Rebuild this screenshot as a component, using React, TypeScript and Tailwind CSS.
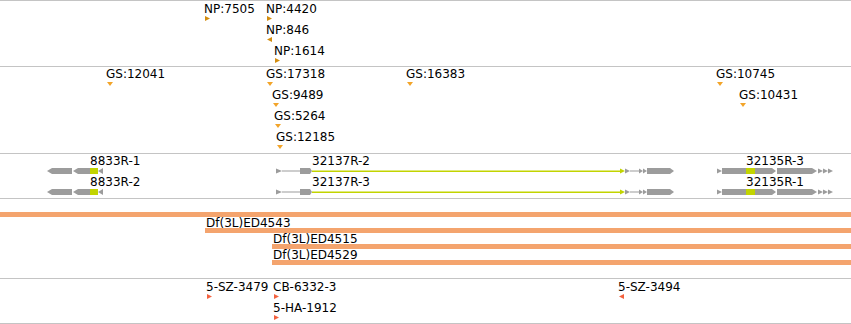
import React from "react";

type Dir = "r" | "l" | "d";
type Feat = { x: number; text: string; dir?: Dir };

const GRAY = "#9c9c9c";
const GREEN = "#c2d400";

function Tri({ dir, color }: { dir: Dir; color: string }) {
  const pts = dir === "r" ? "0,0 5,2.5 0,5" : dir === "l" ? "5,0 0,2.5 5,5" : "0,0 6,0 3,4";
  return (
    <svg width={6} height={5} className={dir === "d" ? "mt-px" : ""}>
      <polygon points={pts} fill={color} />
    </svg>
  );
}

// one stacked row of point features; x is the genomic position on the canvas
function FeatRow({ feats, color }: { feats: Feat[]; color: string }) {
  return (
    <div className="relative h-[21px]">
      {feats.map((f) => (
        <div key={f.text} className="absolute top-0 flex flex-col items-start" style={{ left: f.x }}>
          <span className="-ml-px whitespace-nowrap leading-[13px]">{f.text}</span>
          <Tri dir={f.dir ?? "d"} color={color} />
        </div>
      ))}
    </div>
  );
}

function GeneGlyphs() {
  return (
    <svg width={851} height={6} className="block">
      {/* 8833R */}
      <polygon points="47,3 52,0 72,0 72,6 52,6" fill={GRAY} />
      <polygon points="73,3 78,0 90,0 90,6 78,6" fill={GRAY} />
      <rect x={90} y={0} width={8} height={6} fill={GREEN} />
      <polygon points="98,3 103,0 103,6" fill={GRAY} />
      {/* 32137R */}
      <polygon points="276,0.5 282,3 276,5.5" fill={GRAY} />
      <rect x={282} y={2.5} width={18} height={1} fill={GRAY} />
      <polygon points="300,0 310,0 312,3 310,6 300,6" fill={GRAY} />
      <rect x={312} y={2.5} width={309} height={1.5} fill={GREEN} />
      <polygon points="620,0.5 625,3 620,5.5" fill={GREEN} />
      <polygon points="625,0.5 630,3 625,5.5" fill={GRAY} />
      <rect x={630} y={2.5} width={9} height={1} fill={GRAY} />
      <polygon points="639,0.5 643,3 639,5.5" fill={GRAY} />
      <polygon points="643,0.5 647,3 643,5.5" fill={GRAY} />
      <polygon points="647,0 670,0 674,3 670,6 647,6" fill={GRAY} />
      {/* 32135R */}
      <polygon points="717,0.5 722,3 717,5.5" fill={GRAY} />
      <rect x={722} y={0} width={24} height={6} fill={GRAY} />
      <rect x={746} y={0} width={9} height={6} fill={GREEN} />
      <polygon points="755,0 772,0 776,3 772,6 755,6" fill={GRAY} />
      <polygon points="777,0 812,0 817,3 812,6 777,6" fill={GRAY} />
      <polygon points="818,0.5 823,3 818,5.5" fill={GRAY} />
      <polygon points="823,0.5 828,3 823,5.5" fill={GRAY} />
      <polygon points="828,0.5 833,3 828,5.5" fill={GRAY} />
    </svg>
  );
}

function GeneRow({ labels }: { labels: Feat[] }) {
  return (
    <div className="flex flex-col">
      <div className="relative h-[13px]">
        {labels.map((l) => (
          <span key={l.text} className="absolute top-0 whitespace-nowrap leading-[13px]" style={{ left: l.x }}>
            {l.text}
          </span>
        ))}
      </div>
      <GeneGlyphs />
    </div>
  );
}

const npRows: Feat[][] = [
  [
    { x: 205, text: "NP:7505", dir: "r" },
    { x: 267, text: "NP:4420", dir: "r" },
  ],
  [{ x: 267, text: "NP:846", dir: "l" }],
  [{ x: 275, text: "NP:1614", dir: "r" }],
];

const gsRows: Feat[][] = [
  [
    { x: 107, text: "GS:12041" },
    { x: 267, text: "GS:17318" },
    { x: 407, text: "GS:16383" },
    { x: 717, text: "GS:10745" },
  ],
  [
    { x: 273, text: "GS:9489" },
    { x: 740, text: "GS:10431" },
  ],
  [{ x: 275, text: "GS:5264" }],
  [{ x: 277, text: "GS:12185" }],
];

const dfs = [
  { x: 0, text: "" },
  { x: 205, text: "Df(3L)ED4543" },
  { x: 272, text: "Df(3L)ED4515" },
  { x: 272, text: "Df(3L)ED4529" },
];

const insRows: Feat[][] = [
  [
    { x: 207, text: "5-SZ-3479", dir: "r" },
    { x: 274, text: "CB-6332-3", dir: "r" },
    { x: 619, text: "5-SZ-3494", dir: "l" },
  ],
  [{ x: 274, text: "5-HA-1912", dir: "r" }],
];

export default function App() {
  return (
    <div className="flex w-[851px] h-[324px] flex-col overflow-hidden bg-white text-black text-[12px] font-['DejaVu_Sans',sans-serif]">
      {/* NP track */}
      <div className="flex h-[66px] flex-col border-t border-[#c4c4c4] pt-[2px]">
        {npRows.map((r, i) => (
          <FeatRow key={i} feats={r} color="#d38d0f" />
        ))}
      </div>

      {/* GS track */}
      <div className="flex h-[87px] flex-col border-t border-[#c4c4c4] pt-px">
        {gsRows.map((r, i) => (
          <FeatRow key={i} feats={r} color="#f2a42a" />
        ))}
      </div>

      {/* gene models */}
      <div className="flex h-[45px] flex-col gap-[2px] border-t border-[#c4c4c4] pt-px">
        <GeneRow
          labels={[
            { x: 90, text: "8833R-1" },
            { x: 312, text: "32137R-2" },
            { x: 746, text: "32135R-3" },
          ]}
        />
        <GeneRow
          labels={[
            { x: 90, text: "8833R-2" },
            { x: 312, text: "32137R-3" },
            { x: 746, text: "32135R-1" },
          ]}
        />
      </div>

      {/* deficiencies */}
      <div className="flex h-[80px] flex-col border-t border-[#c4c4c4] pt-[2px]">
        {dfs.map((d) => (
          <div key={d.x + d.text} className="flex flex-col" style={{ marginLeft: d.x }}>
            <div className="h-[11px] whitespace-nowrap pl-px leading-[12px]">{d.text}</div>
            <div className="h-[5px] bg-[#f4a46e]" />
          </div>
        ))}
      </div>

      {/* insertions */}
      <div className="flex h-[46px] flex-col border-y border-[#c4c4c4] pt-[2px]">
        {insRows.map((r, i) => (
          <FeatRow key={i} feats={r} color="#f4623f" />
        ))}
      </div>
    </div>
  );
}
